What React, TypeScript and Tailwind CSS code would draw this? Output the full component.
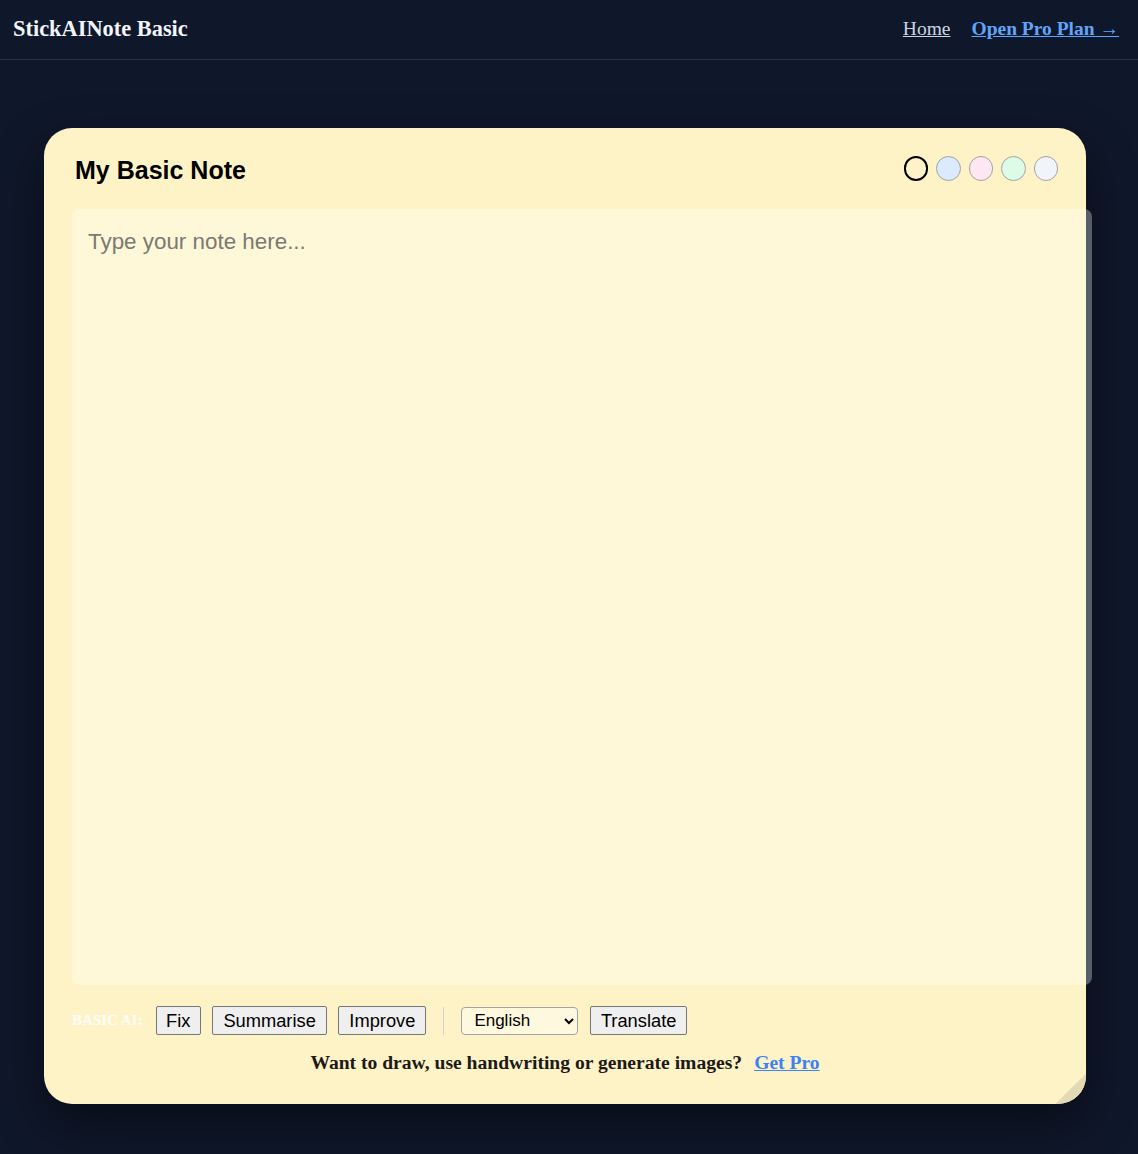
import { useState } from "react";

const colors = [
  { name: "yellow", bg: "bg-[#fef3c7]" },
  { name: "blue", bg: "bg-[#dbeafe]" },
  { name: "pink", bg: "bg-[#fce7f3]" },
  { name: "green", bg: "bg-[#dcfce7]" },
  { name: "gray", bg: "bg-[#f1f5f9]" },
];

export default function App() {
  const [note, setNote] = useState("");
  const [active, setActive] = useState("yellow");
  const [lang, setLang] = useState("English");

  return (
    <div className="min-h-[1154px] bg-[#0f172a] font-['Liberation_Serif',serif]">
      {/* top bar */}
      <header className="flex h-[60px] items-center justify-between border-b border-[#273244] pb-[2px] pl-[13px] pr-[19px]">
        <h1 className="text-[22.4px] font-bold text-[#f1f5f9]">StickAINote Basic</h1>
        <nav className="flex items-center gap-[21px] text-[19.5px]">
          <a href="#" className="text-[#cbd5e1] underline">Home</a>
          <a href="#" className="font-bold text-[#60a5fa] underline">Open Pro Plan →</a>
        </nav>
      </header>

      {/* note card */}
      <div className="relative ml-[44px] mt-[68px] w-[1042px] rounded-[28px] bg-[#fef3c7] px-[28px] pb-[30px] pt-[28px] shadow-[0_20px_50px_rgba(0,0,0,0.45)]">
        <div className="flex h-[29px] items-center justify-between">
          <h2 className="pl-[3px] font-['Liberation_Sans',Arial,sans-serif] text-[25px] font-bold text-black">My Basic Note</h2>
          <div className="flex items-center gap-[8px] pb-[4px]">
            {colors.map((c) => (
              <button
                key={c.name}
                onClick={() => setActive(c.name)}
                className={`h-[24.5px] w-[24.5px] rounded-full ${c.bg} ${
                  active === c.name ? "border-2 border-black" : "border border-[#a3a3a3]"
                }`}
              />
            ))}
          </div>
        </div>

        {/* textarea spills 6px past the card edge, like the original */}
        <textarea
          value={note}
          onChange={(e) => setNote(e.target.value)}
          placeholder="Type your note here..."
          className="mt-[24px] block h-[776px] w-[1020px] resize-none rounded-lg bg-[linear-gradient(to_right,#fef7d8_1014px,#575d6a_1014px)] p-[16px] font-['Liberation_Sans',Arial,sans-serif] text-[22.4px] text-black outline-none placeholder:text-[#7a7a72]"
        />

        <div className="mt-[21px] flex items-center gap-[11.5px] font-['Liberation_Sans',Arial,sans-serif]">
          <span className="w-[72px] shrink-0 whitespace-nowrap font-['Liberation_Serif',serif] text-[15px] font-bold text-white/85">BASIC AI:</span>
          <button className="rounded-[2px] border border-[#767676] bg-[#efefef] px-[9.5px] py-[3px] text-[18.3px] leading-[21px] text-black">Fix</button>
          <button className="rounded-[2px] border border-[#767676] bg-[#efefef] px-[10px] py-[3px] text-[18.3px] leading-[21px] text-black">Summarise</button>
          <button className="rounded-[2px] border border-[#767676] bg-[#efefef] px-[10px] py-[3px] text-[18.3px] leading-[21px] text-black">Improve</button>
          <div className="mx-[5.5px] h-[28px] w-px bg-[#cfd2d6]" />
          <select
            value={lang}
            onChange={(e) => setLang(e.target.value)}
            className="h-[28px] w-[117px] rounded-[4px] border border-[#a3a3a3] bg-[#fef8df] px-[8px] text-[17px] text-black"
          >
            <option>English</option>
            <option>Spanish</option>
            <option>French</option>
            <option>German</option>
          </select>
          <button className="rounded-[2px] border border-[#767676] bg-[#efefef] px-[10px] py-[3px] text-[18.3px] leading-[21px] text-black">Translate</button>
        </div>

        <p className="mt-[17px] text-center text-[19.6px] font-bold leading-[22px] text-[#1c1917]">
          Want to draw, use handwriting or generate images?
          <a href="#" className="ml-[12px] text-[#3b82f6] underline">Get Pro</a>
        </p>

        {/* folded corner */}
        <div className="absolute bottom-0 right-0 h-[30px] w-[30px] rounded-br-[28px] bg-[linear-gradient(135deg,transparent_50%,#e3d9b3_50%)]" />
      </div>
    </div>
  );
}
